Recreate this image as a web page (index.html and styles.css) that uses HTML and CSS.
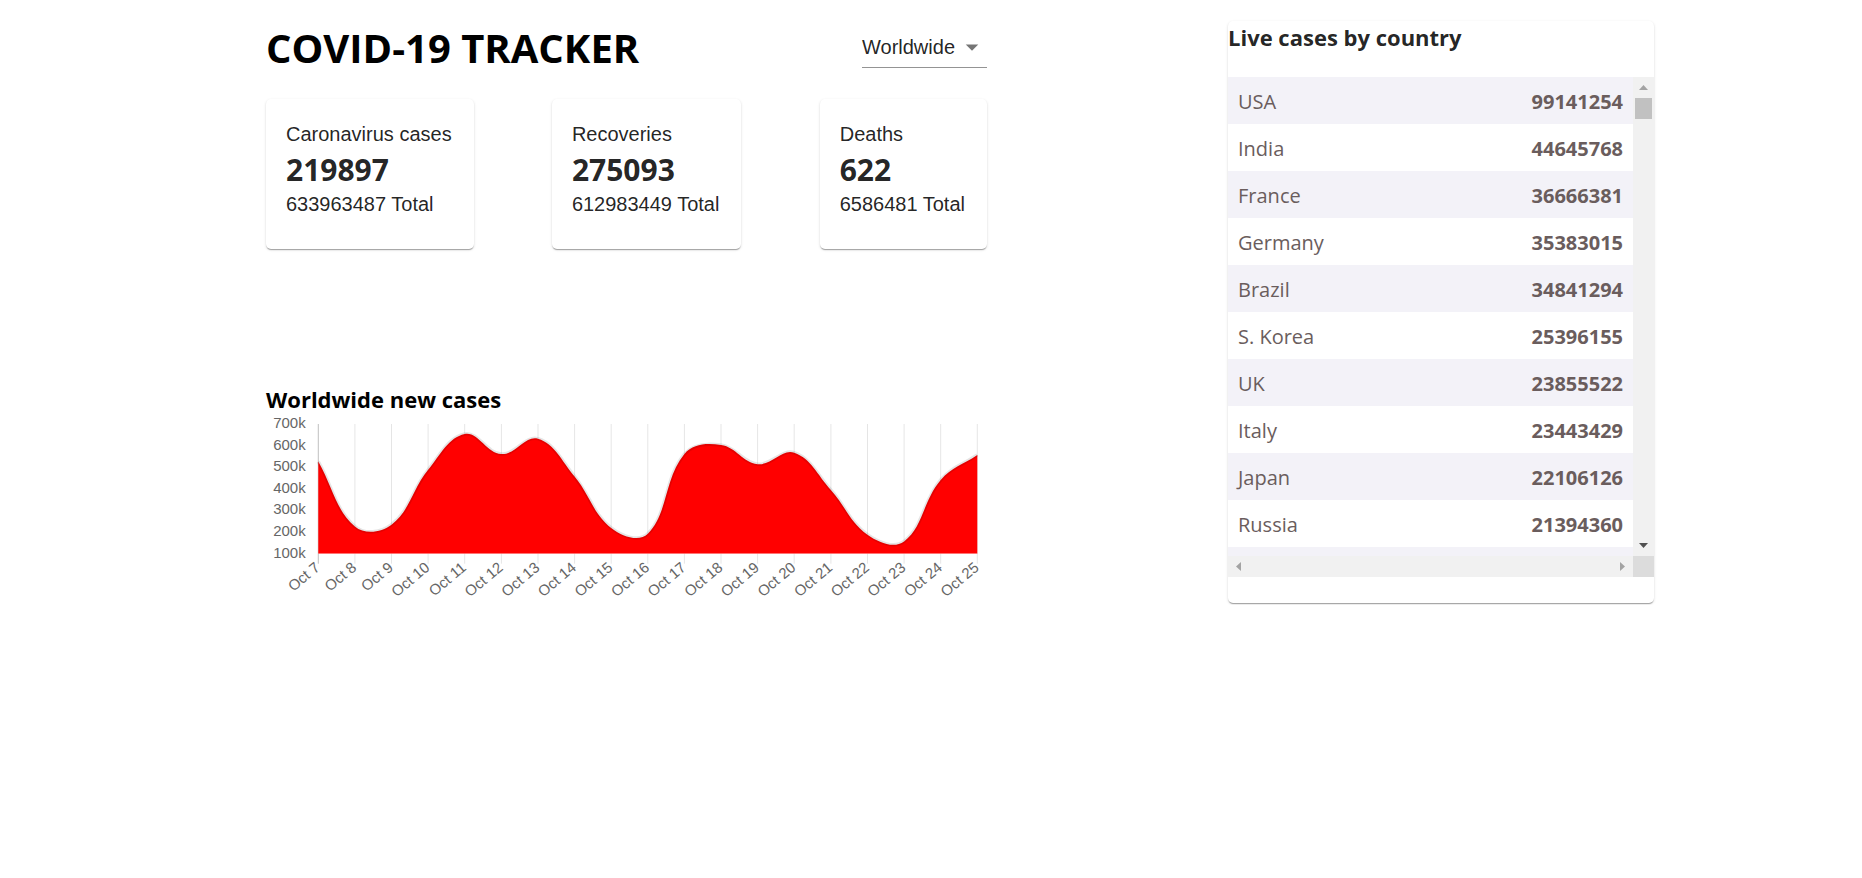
FILE: index.html
```html
<!DOCTYPE html>
<html lang="en">
<head>
<meta charset="utf-8">
<title>COVID-19 Tracker</title>
<link rel="stylesheet" href="styles.css">
</head>
<body>
<div class="app">
  <div class="app-left">
    <div class="header">
      <h1 class="title">COVID-19 TRACKER</h1>
      <div class="select">
        <span class="select-value">Worldwide</span>
        <svg class="select-icon" viewBox="0 0 24 24" width="30" height="30"><path d="M7 10l5 5 5-5z"/></svg>
      </div>
    </div>

    <div class="stats">
      <div class="info-card">
        <div class="info-label">Caronavirus cases</div>
        <div class="info-cases">219897</div>
        <div class="info-total">633963487 Total</div>
      </div>
      <div class="info-card">
        <div class="info-label">Recoveries</div>
        <div class="info-cases">275093</div>
        <div class="info-total">612983449 Total</div>
      </div>
      <div class="info-card">
        <div class="info-label">Deaths</div>
        <div class="info-cases">622</div>
        <div class="info-total">6586481 Total</div>
      </div>
    </div>

    <div class="graph">
      <h3 class="graph-title">Worldwide new cases</h3>
      <svg class="chart" width="721" height="190" viewBox="0 0 721 190">
        <g class="grid">
          <line x1="52.3" y1="9" x2="52.3" y2="148.7" class="axis"/>
          <line x1="88.9" y1="9" x2="88.9" y2="148.7"/>
          <line x1="125.5" y1="9" x2="125.5" y2="148.7"/>
          <line x1="162.1" y1="9" x2="162.1" y2="148.7"/>
          <line x1="198.7" y1="9" x2="198.7" y2="148.7"/>
          <line x1="235.4" y1="9" x2="235.4" y2="148.7"/>
          <line x1="272.0" y1="9" x2="272.0" y2="148.7"/>
          <line x1="308.6" y1="9" x2="308.6" y2="148.7"/>
          <line x1="345.2" y1="9" x2="345.2" y2="148.7"/>
          <line x1="381.8" y1="9" x2="381.8" y2="148.7"/>
          <line x1="418.4" y1="9" x2="418.4" y2="148.7"/>
          <line x1="455.0" y1="9" x2="455.0" y2="148.7"/>
          <line x1="491.6" y1="9" x2="491.6" y2="148.7"/>
          <line x1="528.2" y1="9" x2="528.2" y2="148.7"/>
          <line x1="564.9" y1="9" x2="564.9" y2="148.7"/>
          <line x1="601.5" y1="9" x2="601.5" y2="148.7"/>
          <line x1="638.1" y1="9" x2="638.1" y2="148.7"/>
          <line x1="674.7" y1="9" x2="674.7" y2="148.7"/>
          <line x1="711.3" y1="9" x2="711.3" y2="148.7"/>
        </g>
        <path id="area" class="area" d=""/>
        <path id="curve" class="curve" d=""/>
        <line class="baseline" x1="52.3" y1="138.7" x2="711.3" y2="138.7"/>
        <g class="ylabels">
          <text x="39.7" y="9">700k</text>
          <text x="39.7" y="30.6">600k</text>
          <text x="39.7" y="52.2">500k</text>
          <text x="39.7" y="73.9">400k</text>
          <text x="39.7" y="95.5">300k</text>
          <text x="39.7" y="117.1">200k</text>
          <text x="39.7" y="138.7">100k</text>
        </g>
        <g class="xlabels">
          <text x="52.3" y="151" transform="rotate(-40 52.3 151)">Oct 7</text>
          <text x="88.9" y="151" transform="rotate(-40 88.9 151)">Oct 8</text>
          <text x="125.5" y="151" transform="rotate(-40 125.5 151)">Oct 9</text>
          <text x="162.1" y="151" transform="rotate(-40 162.1 151)">Oct 10</text>
          <text x="198.7" y="151" transform="rotate(-40 198.7 151)">Oct 11</text>
          <text x="235.4" y="151" transform="rotate(-40 235.4 151)">Oct 12</text>
          <text x="272.0" y="151" transform="rotate(-40 272.0 151)">Oct 13</text>
          <text x="308.6" y="151" transform="rotate(-40 308.6 151)">Oct 14</text>
          <text x="345.2" y="151" transform="rotate(-40 345.2 151)">Oct 15</text>
          <text x="381.8" y="151" transform="rotate(-40 381.8 151)">Oct 16</text>
          <text x="418.4" y="151" transform="rotate(-40 418.4 151)">Oct 17</text>
          <text x="455.0" y="151" transform="rotate(-40 455.0 151)">Oct 18</text>
          <text x="491.6" y="151" transform="rotate(-40 491.6 151)">Oct 19</text>
          <text x="528.2" y="151" transform="rotate(-40 528.2 151)">Oct 20</text>
          <text x="564.9" y="151" transform="rotate(-40 564.9 151)">Oct 21</text>
          <text x="601.5" y="151" transform="rotate(-40 601.5 151)">Oct 22</text>
          <text x="638.1" y="151" transform="rotate(-40 638.1 151)">Oct 23</text>
          <text x="674.7" y="151" transform="rotate(-40 674.7 151)">Oct 24</text>
          <text x="711.3" y="151" transform="rotate(-40 711.3 151)">Oct 25</text>
        </g>
      </svg>
    </div>
  </div>

  <div class="table-card">
    <h3 class="table-title">Live cases by country</h3>
    <div class="scroll-frame">
      <div class="table-view">
        <div class="row"><span>USA</span><strong>99141254</strong></div>
        <div class="row"><span>India</span><strong>44645768</strong></div>
        <div class="row"><span>France</span><strong>36666381</strong></div>
        <div class="row"><span>Germany</span><strong>35383015</strong></div>
        <div class="row"><span>Brazil</span><strong>34841294</strong></div>
        <div class="row"><span>S. Korea</span><strong>25396155</strong></div>
        <div class="row"><span>UK</span><strong>23855522</strong></div>
        <div class="row"><span>Italy</span><strong>23443429</strong></div>
        <div class="row"><span>Japan</span><strong>22106126</strong></div>
        <div class="row"><span>Russia</span><strong>21394360</strong></div>
        <div class="row row-peek"></div>
      </div>
      <div class="vbar">
        <div class="sb-btn"><svg width="9" height="5" viewBox="0 0 9 5"><polygon points="0,5 4.5,0 9,5" class="tri-off"/></svg></div>
        <div class="vthumb"></div>
        <div class="vtrack"></div>
        <div class="sb-btn"><svg width="9" height="5" viewBox="0 0 9 5"><polygon points="0,0 9,0 4.5,5" class="tri-on"/></svg></div>
      </div>
      <div class="hbar">
        <div class="sb-btn"><svg width="5" height="9" viewBox="0 0 5 9"><polygon points="5,0 5,9 0,4.5" class="tri-off"/></svg></div>
        <div class="sb-btn"><svg width="5" height="9" viewBox="0 0 5 9"><polygon points="0,0 5,4.5 0,9" class="tri-off"/></svg></div>
      </div>
      <div class="corner"></div>
    </div>
  </div>
</div>
<script src="app.js"></script>
</body>
</html>
```

FILE: styles.css
```css
html, body {
  margin: 0;
  background: #ffffff;
}

body {
  font-family: "Liberation Sans", Arial, sans-serif;
  color: rgba(0, 0, 0, 0.87);
}

.app {
  display: flex;
  align-items: flex-start;
  padding-left: 266px;
  gap: 241px;
}

.app-left {
  width: 721px;
}

/* header */
.header {
  display: flex;
  justify-content: space-between;
  align-items: center;
  margin-top: 24px;
}

.title {
  margin: 0;
  font-family: "Open Sans", sans-serif;
  font-weight: 700;
  font-size: 40px;
  line-height: 48px;
  color: #000;
}

.select {
  width: 125px;
  display: flex;
  align-items: center;
  justify-content: space-between;
  padding: 7px 0 8px;
  border-bottom: 1px solid rgba(0, 0, 0, 0.42);
  font-size: 20px;
  line-height: 24px;
  color: rgba(0, 0, 0, 0.87);
}

.select-icon {
  display: block;
  margin: -3px 0;
  fill: rgba(0, 0, 0, 0.54);
}

/* stat cards */
.stats {
  display: flex;
  justify-content: space-between;
  margin-top: 27px;
}

.info-card {
  padding: 20px 22px 30px 20px;
  border-radius: 5px;
  background: #fff;
  box-shadow: 0 2px 1px -1px rgba(0, 0, 0, 0.2), 0 1px 1px 0 rgba(0, 0, 0, 0.14), 0 1px 3px 0 rgba(0, 0, 0, 0.12);
}

.info-label,
.info-total {
  font-size: 20px;
  line-height: 30px;
  white-space: nowrap;
}

.info-cases {
  margin-top: 2px;
  font-family: "Open Sans", sans-serif;
  font-weight: 700;
  font-size: 30px;
  line-height: 38px;
}

/* graph */
.graph {
  margin-top: 134px;
}

.graph-title {
  margin: 0;
  font-family: "Open Sans", sans-serif;
  font-weight: 700;
  font-size: 22px;
  line-height: 32px;
  color: #000;
}

.chart {
  display: block;
  overflow: visible;
}

.grid line {
  stroke: rgba(0, 0, 0, 0.1);
  stroke-width: 1;
}

.grid line.axis {
  stroke: rgba(0, 0, 0, 0.25);
}

.area {
  fill: #ff0000;
}

.curve {
  fill: none;
  stroke: rgba(0, 0, 0, 0.1);
  stroke-width: 3.5;
}

.baseline {
  stroke: rgba(255, 255, 255, 0.35);
  stroke-width: 1;
}

.ylabels text,
.xlabels text {
  font-family: "Liberation Sans", Arial, sans-serif;
  font-size: 15px;
  fill: #666666;
  text-anchor: end;
  dominant-baseline: middle;
}

/* table card */
.table-card {
  width: 426px;
  margin-top: 21px;
  padding-bottom: 26px;
  border-radius: 5px;
  background: #fff;
  overflow: hidden;
  box-shadow: 0 2px 1px -1px rgba(0, 0, 0, 0.2), 0 1px 1px 0 rgba(0, 0, 0, 0.14), 0 1px 3px 0 rgba(0, 0, 0, 0.12);
}

.table-title {
  margin: 0;
  font-family: "Open Sans", sans-serif;
  font-weight: 700;
  font-size: 22px;
  line-height: 32px;
  color: rgba(0, 0, 0, 0.87);
  white-space: nowrap;
}

.scroll-frame {
  display: grid;
  grid-template-columns: 405px 21px;
  grid-template-rows: 479px 21px;
  margin-top: 24px;
}

.table-view {
  overflow: hidden;
  color: #6a5d5d;
  font-family: "Open Sans", sans-serif;
  font-size: 20px;
  line-height: 27px;
}

.row {
  display: flex;
  justify-content: space-between;
  padding: 11px 10px 9px;
}

.row:nth-child(odd) {
  background: #f3f2f8;
}

.row-peek {
  height: 27px;
}

.row strong {
  font-weight: 700;
}

.vbar {
  display: flex;
  flex-direction: column;
  background: #f1f1f1;
}

.hbar {
  display: flex;
  justify-content: space-between;
  background: #f1f1f1;
}

.sb-btn {
  width: 21px;
  height: 21px;
  display: flex;
  align-items: center;
  justify-content: center;
  flex: none;
}

.sb-btn svg {
  display: block;
}

.vthumb {
  height: 21px;
  margin: 0 2px;
  background: #c1c1c1;
}

.vtrack {
  flex: 1;
}

.corner {
  background: #dcdcdc;
}

.tri-off {
  fill: #a3a3a3;
}

.tri-on {
  fill: #505050;
}
```

FILE: app.js
```js
(function () {
  var vals = [526, 226, 234, 488, 654, 561, 632, 457, 219, 192, 561, 603, 514, 567, 395, 188, 157, 441, 557];
  var x0 = 52.3, dx = 36.611, yb = 138.7, yt = 9, k = (yb - yt) / 600;
  var pts = vals.map(function (v, i) { return { x: x0 + i * dx, y: yb - (v - 100) * k }; });
  var t = 0.4;
  var cp = pts.map(function (cur, i) {
    var prev = pts[i - 1] || cur, next = pts[i + 1] || cur;
    var d01 = Math.hypot(cur.x - prev.x, cur.y - prev.y);
    var d12 = Math.hypot(next.x - cur.x, next.y - cur.y);
    var s01 = d01 / (d01 + d12) || 0, s12 = d12 / (d01 + d12) || 0;
    var fa = t * s01, fb = t * s12;
    function clampY(y) { return Math.min(yb, Math.max(yt, y)); }
    return {
      px: cur.x - fa * (next.x - prev.x), py: clampY(cur.y - fa * (next.y - prev.y)),
      nx: cur.x + fb * (next.x - prev.x), ny: clampY(cur.y + fb * (next.y - prev.y))
    };
  });
  var f = function (n) { return n.toFixed(2); };
  var d = 'M' + f(pts[0].x) + ' ' + f(pts[0].y);
  for (var i = 1; i < pts.length; i++) {
    d += ' C' + f(cp[i - 1].nx) + ' ' + f(cp[i - 1].ny) + ' ' + f(cp[i].px) + ' ' + f(cp[i].py) + ' ' + f(pts[i].x) + ' ' + f(pts[i].y);
  }
  document.getElementById('curve').setAttribute('d', d);
  var last = pts[pts.length - 1];
  document.getElementById('area').setAttribute('d', d + ' L' + f(last.x) + ' ' + yb + ' L' + f(pts[0].x) + ' ' + yb + ' Z');
})();
```
